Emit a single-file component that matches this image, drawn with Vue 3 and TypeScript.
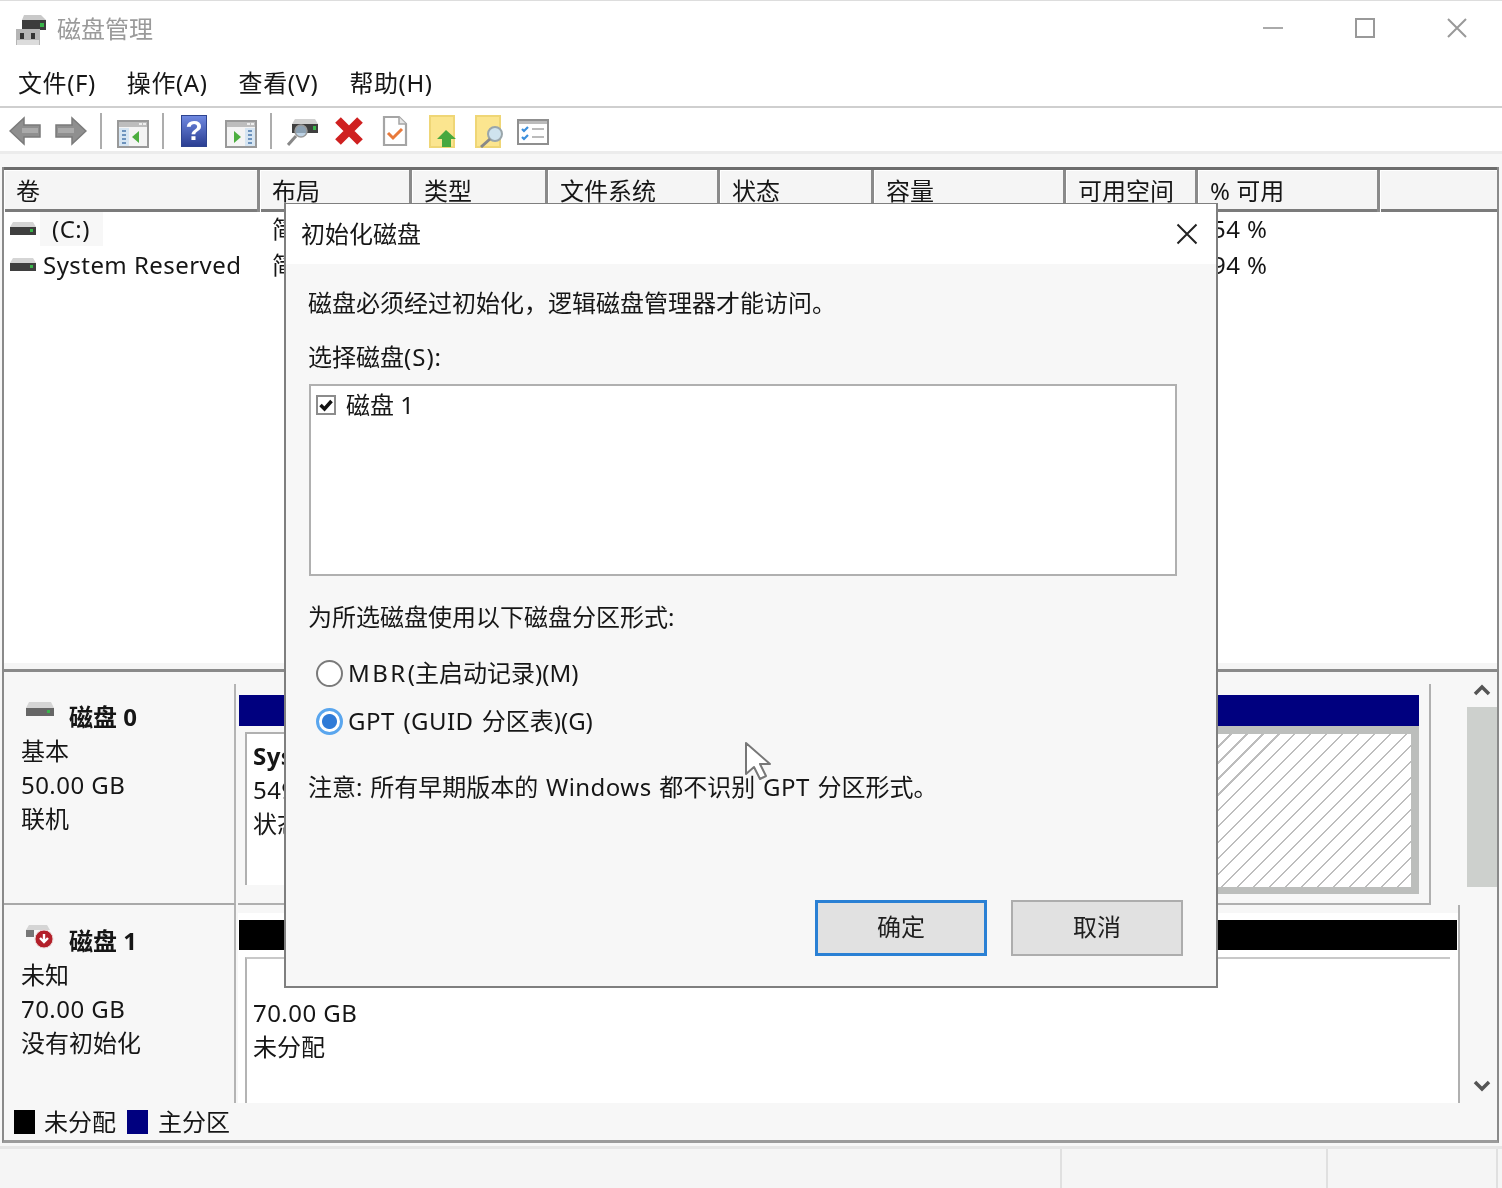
<script setup lang="ts">
const menus = ['文件(F)', '操作(A)', '查看(V)', '帮助(H)']
const columns = ['卷', '布局', '类型', '文件系统', '状态', '容量', '可用空间', '% 可用', '']
const volumes = [
  { name: '(C:)', layout: '简单', free: '54 %', selected: true },
  { name: 'System Reserved', layout: '简单', free: '94 %', selected: false },
]
</script>

<template>
  <div class="app">
    <header class="titlebar">
      <svg class="app-icon" width="30" height="30" viewBox="0 0 30 30">
        <path d="M8 0h17l5 5H6z" fill="#c9c9c9" />
        <rect x="6" y="5" width="24" height="10" fill="#3c3c3c" />
        <rect x="24" y="8" width="4" height="4" fill="#39b54a" />
        <rect x="0" y="14" width="24" height="16" fill="#b5b5b5" />
        <rect x="1" y="25" width="22" height="5" fill="#dcdcdc" />
        <rect x="4" y="18" width="4" height="6" fill="#333" />
        <rect x="15" y="18" width="4" height="6" fill="#333" />
      </svg>
      <span class="app-title">磁盘管理</span>
      <div class="window-controls">
        <svg width="22" height="22" viewBox="0 0 22 22"><path d="M1 11h20" stroke="#aaa" stroke-width="2" /></svg>
        <svg width="22" height="22" viewBox="0 0 22 22"><rect x="2" y="2" width="18" height="18" fill="none" stroke="#999" stroke-width="2" /></svg>
        <svg width="22" height="22" viewBox="0 0 22 22"><path d="M2 2l18 18M20 2L2 20" stroke="#999" stroke-width="2" fill="none" /></svg>
      </div>
    </header>

    <nav class="menubar">
      <span v-for="m in menus" :key="m" class="menu">{{ m }}</span>
    </nav>

    <div class="toolbar">
      <svg class="tool t-back" width="32" height="30" viewBox="0 0 32 30">
        <path d="M1 15L15 2v7h16v12H15v7z" fill="#8f8f8f" stroke="#7b7b7b" stroke-width="1.5" />
        <rect x="13" y="12" width="16" height="5" fill="#aaaaaa" />
      </svg>
      <svg class="tool t-fwd" width="32" height="30" viewBox="0 0 32 30">
        <path d="M31 15L17 2v7H1v12h16v7z" fill="#8f8f8f" stroke="#7b7b7b" stroke-width="1.5" />
        <rect x="3" y="12" width="16" height="5" fill="#aaaaaa" />
      </svg>
      <i class="sep s1"></i>
      <svg class="tool t-pane" width="32" height="28" viewBox="0 0 32 28">
        <rect x="1" y="1" width="30" height="26" fill="#f4f4f4" stroke="#999" stroke-width="2" />
        <rect x="2" y="2" width="28" height="5" fill="#bdbdbd" />
        <rect x="22" y="3" width="3" height="2" fill="#eee" /><rect x="26" y="3" width="3" height="2" fill="#eee" />
        <rect x="2" y="8" width="10" height="18" fill="#d6e5f2" />
        <path d="M5 11h4M5 15h4M5 19h4M5 23h4" stroke="#6d93bd" stroke-width="2" />
        <path d="M22 11v12l-7-6z" fill="#4cae3f" />
      </svg>
      <i class="sep s2"></i>
      <div class="tool t-help">?</div>
      <svg class="tool t-pane2" width="32" height="28" viewBox="0 0 32 28">
        <rect x="1" y="1" width="30" height="26" fill="#f4f4f4" stroke="#999" stroke-width="2" />
        <rect x="2" y="2" width="28" height="5" fill="#bdbdbd" />
        <rect x="22" y="3" width="3" height="2" fill="#eee" /><rect x="26" y="3" width="3" height="2" fill="#eee" />
        <rect x="20" y="8" width="10" height="18" fill="#d6e5f2" />
        <path d="M23 11h4M23 15h4M23 19h4M23 23h4" stroke="#6d93bd" stroke-width="2" />
        <path d="M9 11v12l7-6z" fill="#4cae3f" />
      </svg>
      <i class="sep s3"></i>
      <svg class="tool t-find" width="32" height="32" viewBox="0 0 32 32">
        <path d="M8 3h20l3 5H5z" fill="#d0d0d0" />
        <rect x="5" y="8" width="26" height="9" fill="#3f3f3f" />
        <rect x="26" y="10" width="3" height="4" fill="#39b54a" />
        <circle cx="14" cy="15" r="6" fill="#a8c4dc" fill-opacity=".75" stroke="#9a9a9a" stroke-width="1.5" />
        <path d="M9 20L1 29" stroke="#888" stroke-width="3" />
      </svg>
      <svg class="tool t-x" width="30" height="30" viewBox="0 0 30 30">
        <path d="M4 4L26 26M26 4L4 26" stroke="#cf2020" stroke-width="8" />
      </svg>
      <svg class="tool t-doc" width="26" height="32" viewBox="0 0 26 32">
        <path d="M2 2h15l7 7v21H2z" fill="#fff" stroke="#a5a5a5" stroke-width="2.2" />
        <path d="M17 2v7h7" fill="#e5e5e5" stroke="#a5a5a5" stroke-width="1.5" />
        <path d="M6 18l5 5 9-9" fill="none" stroke="#e8793a" stroke-width="3" />
      </svg>
      <svg class="tool t-up" width="30" height="33" viewBox="0 0 30 33">
        <rect x="1" y="1" width="24" height="31" fill="#fbe58f" stroke="#efd676" stroke-width="2" />
        <path d="M17 15l10 9h-5v8h-9v-8H8z" fill="#47a83f" />
      </svg>
      <svg class="tool t-search" width="30" height="33" viewBox="0 0 30 33">
        <rect x="1" y="1" width="24" height="31" fill="#fbe58f" stroke="#efd676" stroke-width="2" />
        <circle cx="20" cy="19" r="7" fill="#cfe3ee" stroke="#9aa6ab" stroke-width="2" />
        <path d="M15 24L6 32" stroke="#888" stroke-width="3" />
      </svg>
      <svg class="tool t-list" width="32" height="26" viewBox="0 0 32 26">
        <rect x="1" y="1" width="30" height="24" fill="#fff" stroke="#8f8f8f" stroke-width="2" />
        <rect x="2" y="2" width="28" height="3" fill="#bbb" />
        <path d="M5 10l2 2 4-4M5 18l2 2 4-4" fill="none" stroke="#3b8fdc" stroke-width="2.2" />
        <path d="M15 10h12M15 18h12" stroke="#bbb" stroke-width="2" />
      </svg>
    </div>

    <main class="console">
      <section class="volumes">
        <div class="grid head">
          <div v-for="c in columns" :key="c" class="th">{{ c }}</div>
        </div>
        <div v-for="v in volumes" :key="v.name" class="grid row">
          <div class="vol">
            <svg class="drive" width="26" height="14" viewBox="0 0 26 14">
              <path d="M3 0h20l3 5H0z" fill="#d5d5d5" />
              <rect y="5" width="26" height="8" fill="#3f3f3f" />
              <rect x="20" y="7" width="3" height="3" fill="#39b54a" />
            </svg>
            <span class="vol-name lat" :class="{ picked: v.selected }">{{ v.name }}</span>
          </div>
          <div class="td">{{ v.layout }}</div>
          <div class="td free lat">{{ v.free }}</div>
        </div>
      </section>

      <section class="lower">
        <div class="disks-wrap">
          <div class="disks">
            <div class="disk disk0">
              <div class="label">
                <div class="label-head">
                  <svg class="drive big" width="28" height="16" viewBox="0 0 28 16">
                    <path d="M3 0h22l3 6H0z" fill="#d5d5d5" />
                    <rect y="6" width="28" height="8" fill="#666" />
                    <rect x="21" y="8" width="3" height="3" fill="#39b54a" />
                  </svg>
                  <b>磁盘 0</b>
                </div>
                <div>基本</div>
                <div class="lat">50.00 GB</div>
                <div>联机</div>
              </div>
              <div class="map map0">
                <div class="navy"></div>
                <div class="parts">
                  <div class="part-sys">
                    <b class="lat">System Reserved</b>
                    <span class="lat">549 MB NTFS</span>
                    <span>状态良好</span>
                  </div>
                  <div class="part-main"><div class="hatch"></div></div>
                </div>
              </div>
            </div>
            <div class="disk disk1">
              <div class="label">
                <div class="label-head">
                  <svg class="drive big" width="28" height="24" viewBox="0 0 28 24">
                    <path d="M3 0h18l3 5H0z" fill="#d5d5d5" />
                    <rect y="5" width="8" height="7" fill="#777" />
                    <circle cx="18" cy="14" r="9" fill="#b3202a" stroke="#e9d4d4" stroke-width="1" />
                    <path d="M18 9v7M14 13l4 4 4-4" stroke="#fff" stroke-width="2.4" fill="none" />
                  </svg>
                  <b>磁盘 1</b>
                </div>
                <div>未知</div>
                <div class="lat">70.00 GB</div>
                <div>没有初始化</div>
              </div>
              <div class="map map1">
                <div class="black"></div>
                <div class="unalloc">
                  <span class="lat">70.00 GB</span>
                  <span>未分配</span>
                </div>
              </div>
            </div>
          </div>
          <div class="scrollbar">
            <svg width="18" height="12" viewBox="0 0 18 12"><path d="M2 10l7-7 7 7" fill="none" stroke="#555" stroke-width="3.500" /></svg>
            <div class="thumb"></div>
            <svg class="down" width="18" height="12" viewBox="0 0 18 12"><path d="M2 2l7 7 7-7" fill="none" stroke="#555" stroke-width="3.500" /></svg>
          </div>
        </div>
        <div class="legend">
          <i class="swatch k"></i><span>未分配</span>
          <i class="swatch b"></i><span>主分区</span>
        </div>
      </section>
    </main>

    <footer class="statusbar">
      <div class="cell wide"></div>
      <div class="cell mid"></div>
      <div class="cell"></div>
    </footer>

    <div class="dialog">
      <div class="dlg-title">
        <span>初始化磁盘</span>
        <svg width="24" height="24" viewBox="0 0 24 24"><path d="M2.500 2.500l19 19M21.500 2.500l-19 19" stroke="#222" stroke-width="2" fill="none" /></svg>
      </div>
      <div class="dlg-body">
        <p class="l-intro">磁盘必须经过初始化，逻辑磁盘管理器才能访问。</p>
        <p class="l-pick">选择磁盘<span class="paren">(S):</span></p>
        <div class="listbox">
          <span class="check">
            <svg width="20" height="20" viewBox="0 0 20 20">
              <rect x="1" y="1" width="18" height="18" fill="#fff" stroke="#8c8c8c" stroke-width="2" />
              <path d="M4.500 10l4 4 7-8" fill="none" stroke="#111" stroke-width="3.500" />
            </svg>
          </span>
          <span>磁盘 1</span>
        </div>
        <p class="l-form">为所选磁盘使用以下磁盘分区形式:</p>
        <div class="radio r1"><i class="dot"></i><span><span class="wide-lat">MBR</span>(主启动记录)(M)</span></div>
        <div class="radio r2"><i class="dot on"></i><span><span class="lat">GPT (GUID</span> 分区表)(G)</span></div>
        <p class="l-note">注意: 所有早期版本的 <span class="lat">Windows</span> 都不识别 <span class="lat">GPT</span> 分区形式。</p>
        <div class="actions">
          <button class="btn primary" type="button">确定</button>
          <button class="btn" type="button">取消</button>
        </div>
      </div>
    </div>

    <svg class="cursor" width="28" height="40" viewBox="0 0 28 40">
      <path d="M2 2v31l8-7 6 12 6-3-6-12h10z" fill="#fff" stroke="#777" stroke-width="2" stroke-linejoin="round" />
    </svg>
  </div>
</template>

<style>
html, body { margin: 0; background: #f7f7f7; }
</style>

<style scoped>
* { box-sizing: border-box; }
.app {
  position: relative;
  width: 1502px;
  height: 1188px;
  overflow: hidden;
  display: flex;
  flex-direction: column;
  background: #f7f7f7;
  color: #161616;
  font-family: "Noto Sans", "Noto Sans CJK SC", sans-serif;
  font-size: 24px;
  line-height: 34px;
  filter: blur(0.6px);
}
.lat { letter-spacing: .45px; }
.wide-lat { letter-spacing: 2.500px; }

.titlebar {
  height: 60px;
  flex: none;
  display: flex;
  align-items: center;
  background: #fff;
  border-top: 1px solid #ddd;
  padding-left: 16px;
}
.app-icon { margin: -2px 11px 0 0; }
.app-title { color: #9a9a9a; margin-top: -4px; }
.window-controls {
  margin-left: auto;
  margin-right: 34px;
  margin-top: -6px;
  display: flex;
  gap: 70px;
}
.menubar {
  height: 48px;
  flex: none;
  background: #fff;
  display: flex;
  align-items: center;
  padding-left: 18px;
  gap: 31px;
  border-bottom: 2px solid #cfcfcf;
}
.menu { margin-top: -1px; letter-spacing: .6px; }

.toolbar {
  height: 46px;
  flex: none;
  position: relative;
  display: flex;
  align-items: center;
  background: #fff;
  border-bottom: 3px solid #ececec;
  padding: 3px 0 0 9px;
}
.tool { flex: none; display: block; }
.t-fwd { margin-left: 14px; }
.sep { flex: none; width: 2px; height: 36px; background: #adadad; }
.s1 { margin-left: 13px; }
.t-pane { margin-left: 15px; margin-top: 6px; }
.s2 { margin-left: 13px; }
.t-help {
  margin-left: 17px;
  width: 26px;
  height: 32px;
  background: linear-gradient(#6f88e0, #2b3f93);
  border: 1px solid #2e4490;
  color: #fff;
  font: bold 28px/30px "Liberation Sans", sans-serif;
  text-align: center;
}
.t-pane2 { margin-left: 18px; margin-top: 6px; }
.s3 { margin-left: 13px; }
.t-find { margin-left: 15px; margin-top: 2px; }
.t-x { margin-left: 15px; }
.t-doc { margin-left: 18px; }
.t-up { margin-left: 21px; }
.t-search { margin-left: 16px; }
.t-list { margin-left: 12px; margin-top: 2px; }

.console {
  flex: none;
  margin: 13px 3px 0 2px;
  height: 976px;
  display: flex;
  flex-direction: column;
  border-left: 2px solid #8a8a8a;
  border-right: 2px solid #8a8a8a;
  border-bottom: 3px solid #9b9b9b;
}
.volumes {
  height: 505px;
  flex: none;
  background: #fff;
  border-bottom: 3px solid #8a8a8a;
  box-shadow: inset 0 -6px 0 #f5f5f5;
}
.grid {
  display: grid;
  grid-template-columns: 256px 152px 136px 172px 154px 192px 132px 182px 1fr;
}
.head {
  height: 45px;
  border-top: 3px solid #6d6d6d;
  border-bottom: 3px solid #7b7b7b;
  background: #f5f5f5;
}
.th {
  padding-left: 12px;
  line-height: 42px;
  border-right: 3px solid #8a8a8a;
  white-space: pre;
  box-shadow: inset 1px 1px 0 #fff;
}
.th:last-child { border-right: 0; }
.row { height: 36px; }
.row > div { height: 36px; padding-bottom: 2px; line-height: 34px; }
.vol { display: flex; align-items: center; padding-left: 6px; grid-column: 1; }
.drive { flex: none; }
.vol-name { margin-left: 7px; height: 34px; }
.vol-name.picked { background: #f7f7f7; padding: 0 13px 0 12px; margin-left: 4px; }
.td { padding-left: 12px; }
.free { grid-column: 8; padding-left: 14px; }

.lower { flex: 1; display: flex; flex-direction: column; min-height: 0; }
.disks-wrap { height: 431px; flex: none; display: flex; background: #f7f7f7; }
.disks { width: 1463px; flex: none; display: flex; flex-direction: column; }
.disk { display: flex; }
.disk0 { height: 233px; }
.disk1 { height: 198px; }
.label {
  width: 232px;
  flex: none;
  padding-left: 17px;
  border-right: 2px solid #b4b4b4;
}
.disk0 .label {
  margin-top: 12px;
  border-bottom: 2px solid #a9a9a9;
  padding-top: 16px;
}
.disk1 .label { padding-top: 19px; }
.label-head { display: flex; align-items: center; }
.label-head .big { margin-left: 5px; margin-right: 15px; }
.disk0 .big { margin-top: -14px; }
.disk1 .big { margin-top: -8px; margin-right: 15px; }
.map { margin-left: 2px; }
.map0 {
  width: 1193px;
  margin-top: 12px;
  padding: 11px 10px 8px 1px;
  border-right: 2px solid #b0b0b0;
  border-bottom: 2px solid #b0b0b0;
}
.navy { height: 31px; background: #00007f; }
.parts { display: flex; height: 168px; }
.part-sys {
  width: 220px;
  margin: 6px 0 9px 6px;
  padding-left: 6px;
  border-left: 2px solid #b0b0b0;
  border-top: 2px solid #b0b0b0;
  background: #fff;
  display: flex;
  flex-direction: column;
  white-space: nowrap;
}
.part-sys b { margin-top: 5px; }
.part-main { flex: 1; background: #bcbebc; padding: 8px 8px 7px 0; }
.hatch {
  height: 100%;
  background: repeating-linear-gradient(135deg, #fff 0 9.800px, #bdbdbd 9.800px 11.300px);
}
.map1 {
  width: 1222px;
  padding: 15px 0 0 1px;
  border-right: 2px solid #b0b0b0;
  background: linear-gradient(#f7f7f7 0 8px, #fff 8px);
}
.black { height: 30px; background: #000; margin-right: 1px; }
.unalloc {
  margin: 7px 8px 0 6px;
  padding: 37px 0 0 6px;
  border-top: 2px solid #c8c8c8;
  border-left: 2px solid #b4b4b4;
  height: 146px;
  display: flex;
  flex-direction: column;
  line-height: 34px;
}
.scrollbar {
  width: 30px;
  flex: none;
  position: relative;
  display: flex;
  flex-direction: column;
  align-items: center;
  padding-top: 12px;
}
.thumb { width: 30px; height: 180px; margin-top: 11px; background: #cdd0cd; }
.down { margin-top: 193px; }
.legend {
  height: 37px;
  flex: none;
  display: flex;
  align-items: center;
  padding: 1px 0 0 10px;
  background: #f7f7f7;
}
.swatch { width: 21px; height: 24px; flex: none; }
.swatch.k { background: #000; margin-right: 9px; }
.swatch.b { background: #00007f; margin: 0 10px 0 11px; }

.statusbar {
  flex: 1;
  display: flex;
  margin-top: 3px;
  border-top: 3px solid #e6e6e6;
  background: #f5f5f5;
}
.cell { border-right: 2px solid #e0e0e0; }
.cell.wide { width: 1062px; }
.cell.mid { width: 266px; }
.cell:last-child { width: 170px; }

.dialog {
  position: absolute;
  left: 284px;
  top: 203px;
  width: 934px;
  height: 785px;
  border: 2px solid #7f7f7f;
  border-top-width: 1px;
  background: #f7f7f7;
  display: flex;
  flex-direction: column;
  line-height: 34px;
}
.dlg-title {
  height: 60px;
  flex: none;
  background: #fff;
  display: flex;
  align-items: center;
  justify-content: space-between;
  padding: 0 17px 0 15px;
}
.dlg-body {
  flex: 1;
  display: flex;
  flex-direction: column;
  padding: 0 33px 0 22px;
}
.dlg-body p { margin: 0; height: 34px; white-space: nowrap; }
.l-intro { margin-top: 22px !important; }
.l-pick { margin-top: 20px !important; }
.paren { letter-spacing: 1px; }
.listbox {
  margin: 10px 6px 0 1px;
  height: 192px;
  flex: none;
  background: #fff;
  border: 2px solid #b0b0b0;
  display: flex;
  align-items: flex-start;
  padding: 2px 0 0 5px;
}
.check { width: 20px; height: 20px; margin: 7px 10px 0 0; display: block; }
.check svg { display: block; }
.l-form { margin-top: 24px !important; }
.radio { display: flex; align-items: center; height: 34px; flex: none; white-space: nowrap; }
.r1 { margin-top: 22px; }
.r2 { margin-top: 14px; word-spacing: 2px; }
.dot {
  width: 27px;
  height: 27px;
  margin: 0 5px 0 8px;
  flex: none;
  border-radius: 50%;
  background: #fff;
  border: 2px solid #7a7a7a;
}
.dot.on {
  border: 3px solid #5aa6ee;
  background: radial-gradient(circle, #2f7bd7 0 7px, #fff 8px);
}
.l-note { margin-top: 32px !important; word-spacing: 1.500px; }
.actions {
  margin-top: 96px;
  display: flex;
  justify-content: flex-end;
  gap: 24px;
}
.btn {
  width: 172px;
  height: 56px;
  background: #e1e1e1;
  border: 2px solid #adadad;
  color: #1f1f1f;
  font: inherit;
  padding: 0 0 2px;
}
.btn.primary { border: 3px solid #2a80d4; }
.cursor { position: absolute; left: 744px; top: 741px; }
</style>
